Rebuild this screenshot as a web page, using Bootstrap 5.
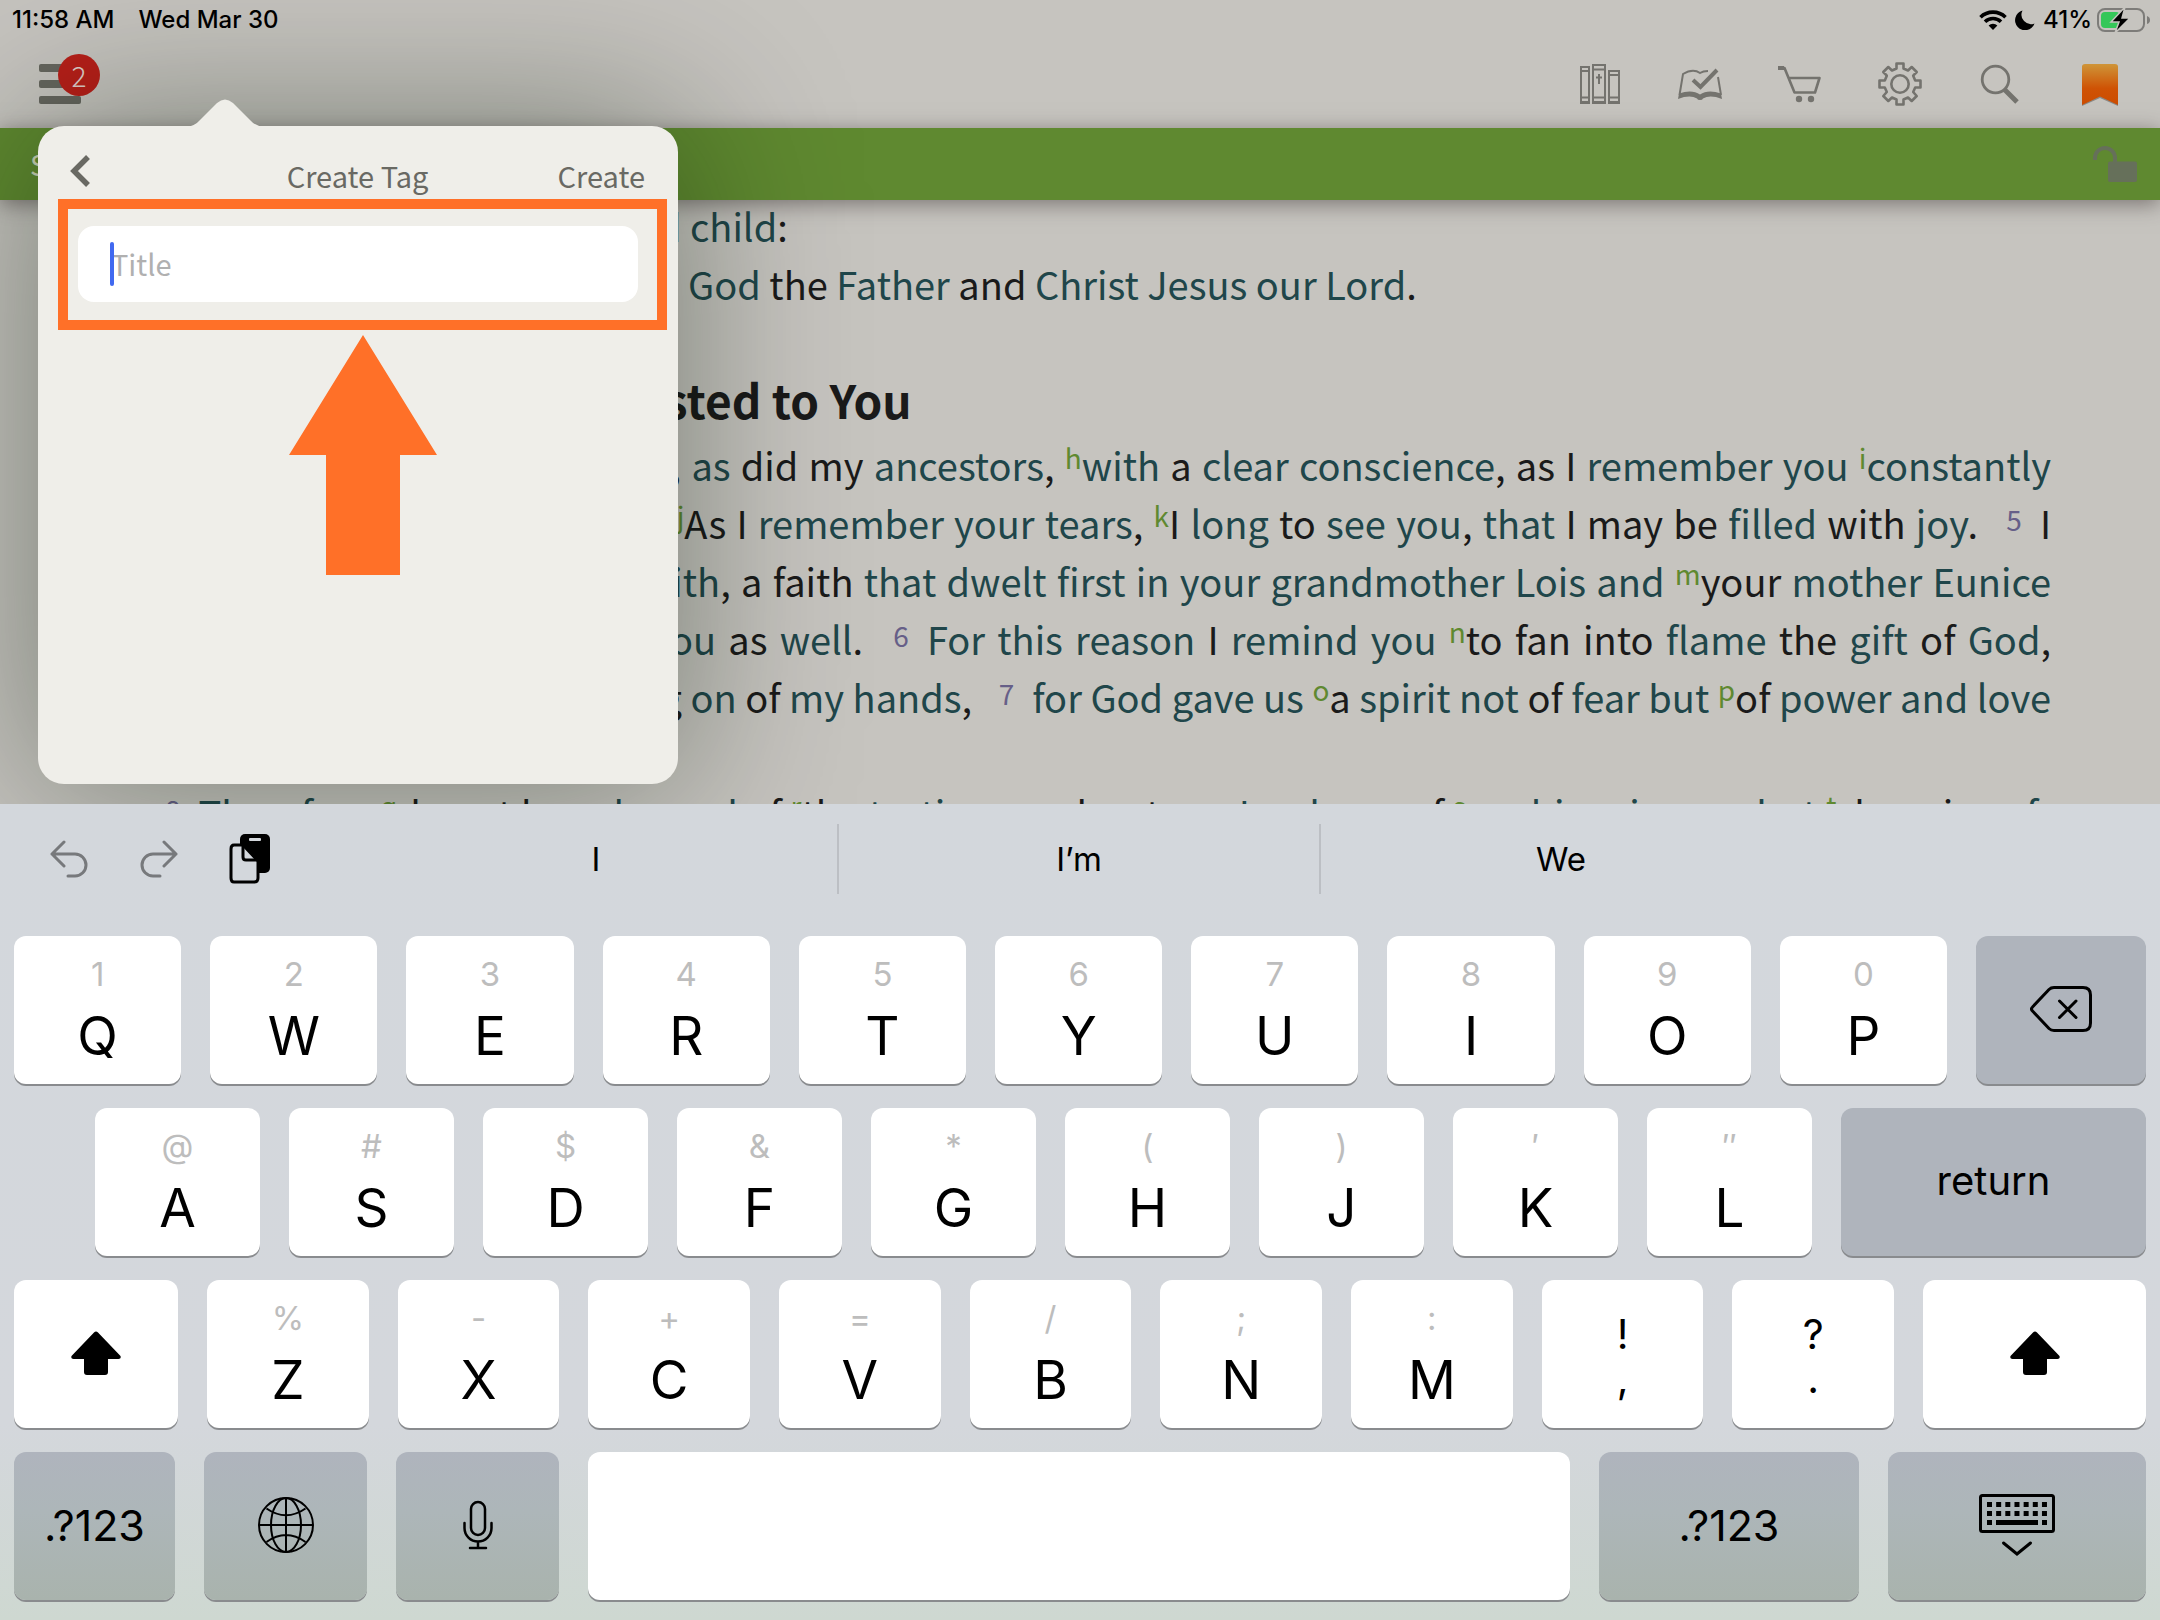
<!DOCTYPE html>
<html lang="en">
<head>
<meta charset="utf-8">
<meta name="viewport" content="width=device-width, initial-scale=1">
<title>Create Tag</title>
<link href="https://cdn.jsdelivr.net/npm/bootstrap@5.3.0/dist/css/bootstrap.min.css" rel="stylesheet">
<style>
:root{--paper:#c6c4bf;--ink:#1a1a1a;--teal:#20464a;--leaf:#5f8930;--pop:#efeee9;--mark:#ff7028;--icon:#74736e}
body{background:var(--paper);color:var(--ink);font-family:"Noto Sans CJK SC","Noto Sans",sans-serif;overflow:hidden}
svg{display:block;flex:none}
button{border:0;background:none;padding:0;color:inherit}
.statusbar{height:40px;padding:0 10px 0 12px;font:500 24px/40px Inter,sans-serif;color:#000}
.toolbar{height:88px;padding:0 38px 0 39px}
.tool{width:44px;height:44px;color:var(--icon)}
.tools{gap:56px}
.count{left:19px;top:-10px;width:42px;height:42px;background:#b81f19;color:#e0cfca;font-weight:300;font-size:28px;line-height:42px}
.greenbar{flex:none;height:72px;background:var(--leaf);padding:0 23px 0 30px;box-shadow:0 4px 20px rgba(60,50,50,.55);z-index:1;color:#c9d2b8;font-size:28px}
.reader{padding:0 109px;flex:1 1 0;min-height:0;overflow:hidden;font-size:38px;line-height:58px}
.reader p{margin:0}
.reader .greet{margin-top:-3px}
.reader .verse{padding-left:48px}
.reader h2{font-size:46px;font-weight:700;line-height:58px;margin:57px 0 8px;padding-left:10px}
.vline{display:block;white-space:nowrap;text-align:justify;text-align-last:justify}
.vline.short{text-align-last:left}
.vline.opening{padding-left:38px}
.vline.wide{margin-left:-20px}
.reader a{color:var(--teal);text-decoration:none}
.reader sup{font-size:28px;line-height:0;top:0;vertical-align:12px;color:var(--leaf)}
.reader .vnum{font-size:28px;line-height:0;vertical-align:8px;color:#665f88;margin:0 18px}
.popbox{z-index:2;left:38px;top:126px;width:640px;height:658px;background:var(--pop);border-radius:26px;box-shadow:0 0 170px 8px rgba(0,18,0,.38);color:#696963}
.beak{left:148px;top:-27px}
.pophead{height:73px;padding:25px 33px 0 32px;font-size:29px}
.pophead .side{width:120px}
.pophead h1{font-size:29px;font-weight:400;margin:0;line-height:44px}
.pophead button{line-height:44px}
.back{margin-top:-10px}
.callout-box{margin:0 11px 0 20px;border:10px solid var(--mark);padding:17px 19px 18px 10px}
.title-input{height:76px;border:0;border-radius:16px;padding:0 33px 2px;font-size:29px;background:#fff}
.title-input::placeholder{color:#b0b0b0;opacity:1}
.caret{left:32px;top:16px;width:4px;height:44px;border-radius:2px;background:#4169f0}
.pointer{margin:5px 11px 0 20px}
.keyboard{z-index:3;flex:none;background:linear-gradient(#d3d7dc,#d4d7dc 76%,#ced8d1);padding:0 14px 20px;font-family:Inter,sans-serif;color:#000}
.suggest{height:132px;padding:20px 0 42px;font-size:33px}
.editing{width:341px;padding-left:35px;gap:50px}
.hint{width:482px;padding-top:2px}
.hint+.hint{border-left:2px solid #bcbfc4}
.krow{gap:29px;margin-bottom:24px}
.krow:last-child{margin-bottom:0}
.krow.inset{padding-left:81px}
.keycap{flex:1 1 0;min-width:0;height:148px;border-radius:12px;background:#fff;box-shadow:0 2px 0 #898b8e;display:flex;flex-direction:column;align-items:center;justify-content:center;font-size:53px;line-height:64px;padding-bottom:2px}
.keycap span{display:block;font-size:33px;line-height:48px;margin-bottom:6px;color:#bdbdbd}
.keycap.two{padding:4px 0 0}
.keycap.two,.keycap.two span{font-size:41px;line-height:44px;margin:0;color:#000}
.keycap.fn{background:#afb4bc;font-size:40px}
.keycap.numkey{font-size:43px}
.lowrow .fn{background:linear-gradient(#afb4bd,#adb6b9 40%,#a9b3ad)}
.w-del{flex:0 0 170px}.w-ret{flex:0 0 305px}.w-shift{flex:0 0 164px}.w-shift2{flex:0 0 223px}
.w-num{flex:0 0 161px}.w-mid{flex:0 0 163px}.w-num2{flex:0 0 260px}.w-hide{flex:0 0 258px}
</style>
<script src="https://cdn.jsdelivr.net/npm/bootstrap@5.3.0/dist/js/bootstrap.bundle.min.js"></script>
</head>
<body class="d-flex flex-column vh-100 position-relative">

<header class="flex-shrink-0">
  <div class="statusbar d-flex justify-content-between">
    <div class="d-flex"><span class="me-4">11:58 AM</span><span>Wed Mar 30</span></div>
    <div class="d-flex align-items-center">
      <svg class="me-2" width="28" height="20" viewBox="0 0 28 20" fill="none" stroke="#000" stroke-width="3.6"><path d="M1.500 7.200a18 18 0 0 1 25 0M6 11.800a11.500 11.500 0 0 1 16 0"/><path d="M14 20l-4.400-4.600a6.400 6.400 0 0 1 8.800 0z" fill="#000" stroke="none"/></svg>
      <svg class="me-2" width="20" height="20" viewBox="0 0 20 20"><path d="M7.500 0.500A10 10 0 1 0 19.500 13.500A9.500 9.500 0 0 1 7.500 .5z"/></svg>
      <span class="me-1">41%</span>
      <svg width="54" height="26" viewBox="0 0 54 26"><rect x="2" y="2" width="46" height="22" rx="7" fill="none" stroke="#7d7c79" stroke-width="2"/><path d="M51 9v8q3-1 3-4t-3-4z" fill="#7d7c79"/><rect x="5" y="5" width="19" height="16" rx="4" fill="#35c759"/><path d="M29 0L15 15h8l-4 11 15-15h-8z" fill="#000" stroke="#c6c4bf" stroke-width="1.500"/></svg>
    </div>
  </div>
  <div class="toolbar d-flex justify-content-between align-items-center">
    <button class="position-relative" aria-label="Menu">
      <svg width="42" height="40" viewBox="0 0 42 40" fill="#66665f"><rect width="42" height="8" rx="2"/><rect y="16" width="42" height="8" rx="2"/><rect y="32" width="42" height="8" rx="2"/></svg>
      <span class="count position-absolute rounded-circle text-center">2</span>
    </button>
    <nav class="tools d-flex" aria-label="Tools">
      <button class="tool" aria-label="Library"><svg width="44" height="44" viewBox="0 0 44 44" fill="none" stroke="currentColor" stroke-width="2"><path d="M3 5h8v36H3zM3 9h8M3 35.500h8M3 40h8M15 3h12v38H15zM15 7.500h12M15 35.500h12M15 40h12M31 9h10v32H31zM31 13h10M31 35.500h10M31 40h10"/><path d="M21 12v10M18 15.500h6" stroke-width="2"/></svg></button>
      <button class="tool" aria-label="Reading plans"><svg width="44" height="44" viewBox="0 0 44 44" fill="none" stroke="currentColor"><path d="M1.500 33L5 12Q15 6 22 11 25 9 30 9" stroke-width="2"/><path d="M40 15l3 18" stroke-width="2"/><path d="M0 37L1 31.500Q14 27 22 32.500 30 27 43 31.500L44 37Q32 32.500 25 36.500 24.500 38 22 38t-3-1.500Q12 32.500 0 37z" fill="currentColor" stroke="none"/><path d="M15 18l7.500 7L39 8" stroke-width="4"/></svg></button>
      <button class="tool" aria-label="Store"><svg width="44" height="44" viewBox="0 0 44 44" fill="none" stroke="currentColor" stroke-width="2.600" stroke-linejoin="round"><path d="M0 6h6.500l10 24.500H37L41.500 16H11.500"/><path d="M0 6h6" stroke-width="4"/><circle cx="21" cy="37" r="3.200" fill="currentColor" stroke="none"/><circle cx="33" cy="37" r="3.200" fill="currentColor" stroke="none"/></svg></button>
      <button class="tool" aria-label="Settings"><svg width="44" height="44" viewBox="0 0 44 44" fill="none" stroke="currentColor" stroke-width="2.600" stroke-linejoin="round"><circle cx="22" cy="22" r="8.700"/><path d="M18.500 1.500h7v5l4.500 2 3.700-3.500 5 5L35.200 13.700l2 4.800h5.300v7h-5.300l-2 4.500 3.500 4-5 5-3.700-3.500-4.500 2v5h-7v-5l-4.500-2L10.300 39l-5-5 3.500-4-2-4.500H1.500v-7h5.300l2-4.800L5.300 10l5-5L14 8.500l4.500-2z"/></svg></button>
      <button class="tool" aria-label="Search"><svg width="44" height="44" viewBox="0 0 44 44" fill="none" stroke="currentColor"><circle cx="17.500" cy="17.500" r="13.300" stroke-width="2.800"/><path d="M26.500 27.500L39 40" stroke-width="5"/></svg></button>
      <button class="tool" aria-label="Bookmark"><svg width="44" height="46" viewBox="0 0 44 46"><defs><linearGradient id="bm" x2="0" y2="1"><stop offset="0" stop-color="#cf9538"/><stop offset=".6" stop-color="#cf5204"/><stop offset="1" stop-color="#cc4c00"/></linearGradient></defs><path d="M4 6q0-3 3-3h30q3 0 3 3v38l-18-8-18 8z" fill="#8a8884"/><path d="M4 5q0-3 3-3h30q3 0 3 3v38l-18-8.500L4 43z" fill="url(#bm)"/></svg></button>
    </nav>
  </div>
</header>

<div class="greenbar d-flex justify-content-between align-items-center position-relative">
  <span>Search</span>
  <button aria-label="Unlock"><svg width="44" height="36" viewBox="0 0 44 36"><path d="M2 14V12a10 10 0 0 1 20 0v6" fill="none" stroke="#66705a" stroke-width="4"/><rect x="15" y="15.500" width="29" height="20.500" rx="2" fill="#66705a"/></svg></button>
</div>

<main class="reader">
  <p class="greet verse"><span class="vnum">2</span>To <a href="#">Timothy</a>, &nbsp;<sup>d</sup>my &nbsp;<sup>e</sup><a href="#">beloved child</a>:</p>
  <p class="verse"><a href="#">Grace</a>, mercy, and <a href="#">peace from God</a> the <a href="#">Father</a> and <a href="#">Christ Jesus our Lord</a>.</p>
  <h2>Guard the Deposit Entrusted to You</h2>
  <p>
    <span class="vline opening"><span class="vnum">3</span>I <a href="#">thank God</a> <sup>g</sup>whom I <a href="#">serve</a>, <a href="#">as</a> did my <a href="#">ancestors</a>, <sup>h</sup><a href="#">with</a> a <a href="#">clear conscience</a>, as I <a href="#">remember you</a> <sup>i</sup><a href="#">constantly</a></span>
    <span class="vline">in my prayers night and day. <span class="vnum">4</span><sup>j</sup>As I <a href="#">remember your tears</a>, <sup>k</sup>I <a href="#">long</a> to <a href="#">see you</a>, <a href="#">that</a> I may be <a href="#">filled</a> with <a href="#">joy</a>. <span class="vnum">5</span>I</span>
    <span class="vline">am reminded of your <sup>l</sup>sincere <a href="#">faith</a>, a faith <a href="#">that dwelt first in your grandmother Lois and</a> <sup>m</sup>your <a href="#">mother Eunice</a></span>
    <span class="vline">and now, I am sure, dwells in <a href="#">you</a> as <a href="#">well</a>. <span class="vnum">6</span><a href="#">For this reason</a> I <a href="#">remind you</a> <sup>n</sup>to fan into <a href="#">flame</a> the <a href="#">gift</a> of <a href="#">God</a>,</span>
    <span class="vline wide">which is in you through the laying <a href="#">on</a> of <a href="#">my hands</a>, <span class="vnum">7</span><a href="#">for God gave us</a> <sup>o</sup>a <a href="#">spirit not</a> of <a href="#">fear but</a> <sup>p</sup>of <a href="#">power and love</a></span>
    <span class="vline short">and self-control.</span>
    <span class="vline opening"><span class="vnum">8</span><a href="#">Therefore</a> <sup>q</sup>do not be <a href="#">ashamed</a> of <sup>r</sup>the <a href="#">testimony</a> about <a href="#">our Lord</a>, nor of <sup>s</sup>me <a href="#">his prisoner</a>, <a href="#">but</a> <sup>t</sup>share in <a href="#">suf-</a></span>
  </p>
</main>

<section class="popbox position-absolute" role="dialog" aria-label="Create Tag">
  <svg class="beak position-absolute" width="78" height="28" viewBox="0 0 78 28"><path d="M0 28Q9 27 14 21L31 4Q39-3 47 4L64 21Q69 27 78 28z" fill="#efeee9"/></svg>
  <div class="pophead d-flex align-items-center justify-content-between">
    <div class="side"><button class="back" aria-label="Back"><svg width="20" height="32" viewBox="0 0 20 32" fill="none" stroke="#696963" stroke-width="5.500"><path d="M18 2L4 16l14 14"/></svg></button></div>
    <h1>Create Tag</h1>
    <div class="side text-end"><button>Create</button></div>
  </div>
  <div class="callout-box">
    <div class="position-relative">
      <input class="form-control title-input" type="text" placeholder="Title" aria-label="Title">
      <span class="caret position-absolute"></span>
    </div>
  </div>
  <div class="pointer d-flex justify-content-center"><svg width="148" height="240" viewBox="0 0 148 240"><path d="M74 0l74 120h-37v120H37V120H0z" fill="#ff7028"/></svg></div>
</section>

<section class="keyboard position-relative" aria-label="Keyboard">
  <div class="suggest d-flex">
    <div class="editing d-flex align-items-center">
      <button aria-label="Undo"><svg width="40" height="38" viewBox="0 0 40 38" fill="none" stroke="#77797c" stroke-width="3" stroke-linecap="round" stroke-linejoin="round"><path d="M15 2L3 14l12 12M3 14h23a11 11 0 0 1 0 22h-7"/></svg></button>
      <button aria-label="Redo"><svg width="40" height="38" viewBox="0 0 40 38" fill="none" stroke="#77797c" stroke-width="3" stroke-linecap="round" stroke-linejoin="round"><path d="M25 2l12 12-12 12M37 14H14a11 11 0 0 0 0 22h7"/></svg></button>
      <button aria-label="Paste"><svg width="42" height="50" viewBox="0 0 42 50"><rect x="11" y="0" width="30" height="39" rx="5"/><rect x="20" y="4" width="12" height="3" rx="1" fill="#d3d7dc"/><path d="M5 11h9l15 16v17q0 4-4 4H5q-3 0-3-4V15q0-4 3-4z" fill="#d3d7dc" stroke="#000" stroke-width="3"/><path d="M14 12v11q0 3 3 3h11" fill="none" stroke="#000" stroke-width="3"/></svg></button>
    </div>
    <button class="hint">I</button><button class="hint">I’m</button><button class="hint">We</button>
  </div>
  <div class="krow d-flex">
    <button class="keycap"><span>1</span>Q</button><button class="keycap"><span>2</span>W</button><button class="keycap"><span>3</span>E</button><button class="keycap"><span>4</span>R</button><button class="keycap"><span>5</span>T</button><button class="keycap"><span>6</span>Y</button><button class="keycap"><span>7</span>U</button><button class="keycap"><span>8</span>I</button><button class="keycap"><span>9</span>O</button><button class="keycap"><span>0</span>P</button>
    <button class="keycap fn w-del" aria-label="Delete"><svg width="62" height="46" viewBox="0 0 62 46" fill="none" stroke="#000" stroke-width="3" stroke-linecap="round" stroke-linejoin="round"><path d="M24 1.500h29q7.500 0 7.500 7.500v28q0 7.500-7.500 7.500H24q-3 0-5-2L2.500 25q-2-2 0-4L19 3.500q2-2 5-2zM29.500 15L46 31.500M46 15L29.500 31.500"/></svg></button>
  </div>
  <div class="krow inset d-flex">
    <button class="keycap"><span>@</span>A</button><button class="keycap"><span>#</span>S</button><button class="keycap"><span>$</span>D</button><button class="keycap"><span>&amp;</span>F</button><button class="keycap"><span>*</span>G</button><button class="keycap"><span>(</span>H</button><button class="keycap"><span>)</span>J</button><button class="keycap"><span>′</span>K</button><button class="keycap"><span>″</span>L</button>
    <button class="keycap fn w-ret">return</button>
  </div>
  <div class="krow d-flex">
    <button class="keycap w-shift" aria-label="Shift"><svg width="50" height="44" viewBox="0 0 50 44"><path d="M23 1.500q2-2 4 0L49.500 25q1 3-2 3H37v13q0 3-3 3H16q-3 0-3-3V28H2.500q-3 0-2-3z"/></svg></button>
    <button class="keycap"><span>%</span>Z</button><button class="keycap"><span>-</span>X</button><button class="keycap"><span>+</span>C</button><button class="keycap"><span>=</span>V</button><button class="keycap"><span>/</span>B</button><button class="keycap"><span>;</span>N</button><button class="keycap"><span>:</span>M</button><button class="keycap two"><span>!</span>,</button><button class="keycap two"><span>?</span>.</button>
    <button class="keycap w-shift2" aria-label="Shift"><svg width="50" height="44" viewBox="0 0 50 44"><path d="M23 1.500q2-2 4 0L49.500 25q1 3-2 3H37v13q0 3-3 3H16q-3 0-3-3V28H2.500q-3 0-2-3z"/></svg></button>
  </div>
  <div class="krow lowrow d-flex">
    <button class="keycap fn numkey w-num">.?123</button>
    <button class="keycap fn w-mid" aria-label="Next keyboard"><svg width="56" height="56" viewBox="0 0 56 56" fill="none" stroke="#000" stroke-width="2"><circle cx="28" cy="28" r="27"/><ellipse cx="28" cy="28" rx="15" ry="27"/><path d="M28 1v54M1 28h54M8.500 11.500Q28 25 47.500 11.500M8.500 45Q28 31 47.500 45"/></svg></button>
    <button class="keycap fn w-mid" aria-label="Dictate"><svg width="30" height="50" viewBox="0 0 30 50" fill="none" stroke="#000" stroke-width="2.500" stroke-linecap="round"><rect x="8" y="2" width="14" height="33" rx="7"/><path d="M1.500 23v5a13.500 13.500 0 0 0 27 0v-5M15 42v6M7 48h16"/></svg></button>
    <button class="keycap" aria-label="Space"></button>
    <button class="keycap fn numkey w-num2">.?123</button>
    <button class="keycap fn w-hide" aria-label="Hide keyboard"><svg width="76" height="62" viewBox="0 0 76 62" fill="none" stroke="#000"><rect x="1.500" y="1.500" width="73" height="36" rx="2" stroke-width="3"/><path d="M8 10.500h60M8 19.500h60" stroke-width="5" stroke-dasharray="5 4.160"/><path d="M8 28.500h5M17 28.500h42M63 28.500h5" stroke-width="5"/><path d="M24.500 49L38 60l13.500-11" stroke-width="3" stroke-linecap="round"/></svg></button>
  </div>
</section>
</body>
</html>
